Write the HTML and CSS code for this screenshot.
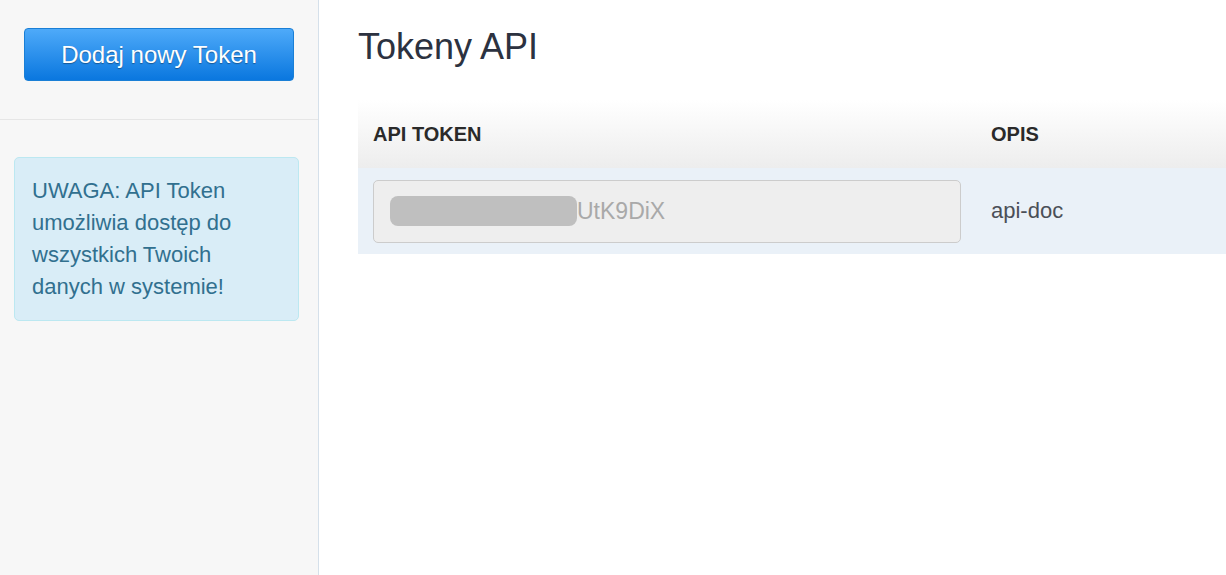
FILE: index.html
```html
<!DOCTYPE html>
<html lang="pl">
<head>
    <meta charset="UTF-8">
    <meta name="viewport" content="width=device-width, initial-scale=1">
    <title>Tokeny API</title>
    <link rel="stylesheet" href="styles.css">
</head>
<body>

<div class="layout">
    <!-- Sidebar -->
    <aside class="sidebar">
        <div class="sidebar-top">
            <button type="button" class="btn-add">Dodaj nowy Token</button>
        </div>
        <div class="alert-info">
            UWAGA: API Token umożliwia dostęp do wszystkich Twoich danych w systemie!
        </div>
    </aside>

    <!-- Main content -->
    <main class="content">
        <h1>Tokeny API</h1>
        <table class="tokens">
            <thead>
                <tr>
                    <th class="col-token">API Token</th>
                    <th>Opis</th>
                </tr>
            </thead>
            <tbody>
                <tr>
                    <td class="col-token">
                        <div class="token-field">
                            <span class="token-hidden"></span><span class="token-tail">UtK9DiX</span>
                        </div>
                    </td>
                    <td class="desc">api-doc</td>
                </tr>
            </tbody>
        </table>
    </main>
</div>

</body>
</html>
```

FILE: styles.css
```css
body {
    font-family: "Liberation Sans", Arial, sans-serif;
    margin: 0;
    background-color: #fff;
}

.layout {
    display: flex;
    min-height: 575px;
}

.sidebar {
    width: 318px;
    flex-shrink: 0;
    background-color: #f7f7f7;
    border-right: 1px solid #d5e0ea;
}

.sidebar-top {
    padding: 28px 24px 38px 24px;
    border-bottom: 1px solid #e6e6e6;
}

.btn-add {
    display: block;
    width: 270px;
    height: 53px;
    font-family: inherit;
    font-size: 24px;
    color: #fff;
    text-shadow: 0 1px 1px rgba(0, 0, 0, 0.35);
    background: linear-gradient(to bottom, #4eaaf9, #0a77df);
    border: 1px solid #1a7fd6;
    border-radius: 4px;
    cursor: pointer;
}

.alert-info {
    margin: 37px 19px 0 14px;
    padding: 17px 17px;
    background-color: #d9edf7;
    border: 1px solid #bce8f1;
    border-radius: 5px;
    color: #31708f;
    font-size: 22px;
    line-height: 32px;
}

.content {
    flex: 1;
    padding: 0 0 0 39px;
}

h1 {
    font-size: 36px;
    font-weight: normal;
    color: #2c3240;
    margin: 27px 0 33px 0;
    line-height: 40px;
}

.tokens {
    width: 100%;
    border-collapse: collapse;
}

.tokens th {
    text-align: left;
    font-size: 20px;
    font-weight: bold;
    text-transform: uppercase;
    color: #2a2a2a;
    height: 68px;
    padding: 0 15px;
    background: linear-gradient(to bottom, #fff, #ededed);
}

.tokens td {
    background-color: #eaf1f8;
    height: 86px;
    padding: 0 15px;
}

.col-token {
    width: 588px;
}

.token-field {
    display: flex;
    align-items: center;
    height: 61px;
    padding: 0 16px;
    background-color: #eee;
    border: 1px solid #ccc;
    border-radius: 5px;
}

.token-hidden {
    display: inline-block;
    width: 187px;
    height: 30px;
    background-color: #bfbfbf;
    border-radius: 8px;
}

.token-tail {
    font-size: 23px;
    color: #a9a9a9;
}

.desc {
    font-size: 22px;
    color: #4a4f57;
}
```
